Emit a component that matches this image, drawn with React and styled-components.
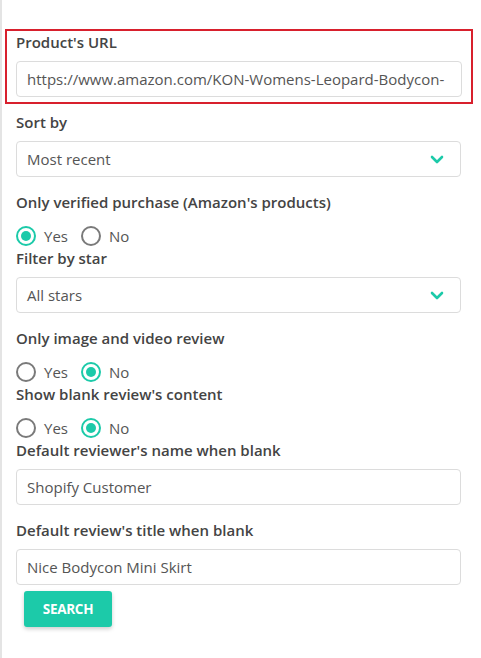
import styled, { createGlobalStyle } from 'styled-components'
import { useState } from 'react'

const teal = '#1ccaa9'

const GlobalStyle = createGlobalStyle`
	body {
		margin: 0;
		background: #fff;
		font-family: 'Open Sans', 'Noto Sans', sans-serif;
	}
`

const Page = styled.div`
	min-height: 658px;
	box-sizing: border-box;
	border-left: 2px solid #e4e4e4;
	padding: 29px 20px 0 14px;
`

const Highlight = styled.div`
	border: 2px solid #d8202d;
	margin: 0 -12px 7px -11px;
	padding: 0 9px 5px 9px;
`

const Field = styled.div`
	margin-bottom: ${(p) => (p.$tight ? '0' : '14px')};
`

const Label = styled.div`
	font-size: 15px;
	font-weight: 600;
	line-height: 22px;
	color: #444;
	margin-bottom: ${(p) => (p.$gap || 8)}px;
`

const TextBox = styled.div`
	display: flex;
	align-items: center;
	height: 36px;
	box-sizing: border-box;
	padding: 0 10px;
	border: 1px solid #dcdcdc;
	border-radius: 4px;
	font-size: 15px;
	color: #555;
	white-space: nowrap;
	overflow: hidden;
`

const SelectBox = styled(TextBox)`
	justify-content: space-between;
	padding-right: 16px;
	cursor: pointer;
`

const RadioRow = styled.div`
	display: flex;
	align-items: center;
	height: 23px;
`

const RadioItem = styled.label`
	display: flex;
	align-items: center;
	gap: 8px;
	margin-right: 13px;
	font-size: 15px;
	color: #555;
	cursor: pointer;
`

const Circle = styled.span`
	width: 20px;
	height: 20px;
	box-sizing: border-box;
	border-radius: 50%;
	border: 2px solid ${(p) => (p.$on ? teal : '#7a7a7a')};
	display: flex;
	align-items: center;
	justify-content: center;

	&::after {
		content: '';
		width: 10px;
		height: 10px;
		border-radius: 50%;
		background: ${(p) => (p.$on ? teal : 'transparent')};
	}
`

const Button = styled.button`
	margin: 6px 0 0 8px;
	width: 88px;
	height: 36px;
	border: none;
	border-radius: 3px;
	background: ${teal};
	color: #fff;
	font-family: inherit;
	font-size: 13.5px;
	font-weight: 700;
	letter-spacing: -0.3px;
	box-shadow: 0 2px 4px rgba(0, 0, 0, 0.2);
	cursor: pointer;
`

const Chevron = () => (
	<svg width="14" height="9" viewBox="0 0 14 9">
		<path d="M2 2l5 5 5-5" fill="none" stroke={teal} strokeWidth="2.6" strokeLinecap="round" strokeLinejoin="round" />
	</svg>
)

const YesNo = ({ value, onChange }) => (
	<RadioRow>
		<RadioItem onClick={() => onChange(true)}>
			<Circle $on={value} />
			Yes
		</RadioItem>
		<RadioItem onClick={() => onChange(false)}>
			<Circle $on={!value} />
			No
		</RadioItem>
	</RadioRow>
)

export default function App() {
	const [verified, setVerified] = useState(true)
	const [media, setMedia] = useState(false)
	const [blank, setBlank] = useState(false)

	return (
		<Page>
			<GlobalStyle />
			<Highlight>
				<Label>Product's URL</Label>
				<TextBox>https://www.amazon.com/KON-Womens-Leopard-Bodycon-</TextBox>
			</Highlight>
			<Field>
				<Label>Sort by</Label>
				<SelectBox>
					Most recent
					<Chevron />
				</SelectBox>
			</Field>
			<Field $tight>
				<Label $gap={11}>Only verified purchase (Amazon's products)</Label>
				<YesNo value={verified} onChange={setVerified} />
			</Field>
			<Field>
				<Label>Filter by star</Label>
				<SelectBox>
					All stars
					<Chevron />
				</SelectBox>
			</Field>
			<Field $tight>
				<Label $gap={11}>Only image and video review</Label>
				<YesNo value={media} onChange={setMedia} />
			</Field>
			<Field $tight>
				<Label $gap={11}>Show blank review's content</Label>
				<YesNo value={blank} onChange={setBlank} />
			</Field>
			<Field>
				<Label>Default reviewer's name when blank</Label>
				<TextBox>Shopify Customer</TextBox>
			</Field>
			<Field $tight>
				<Label>Default review's title when blank</Label>
				<TextBox>Nice Bodycon Mini Skirt</TextBox>
			</Field>
			<Button>SEARCH</Button>
		</Page>
	)
}
